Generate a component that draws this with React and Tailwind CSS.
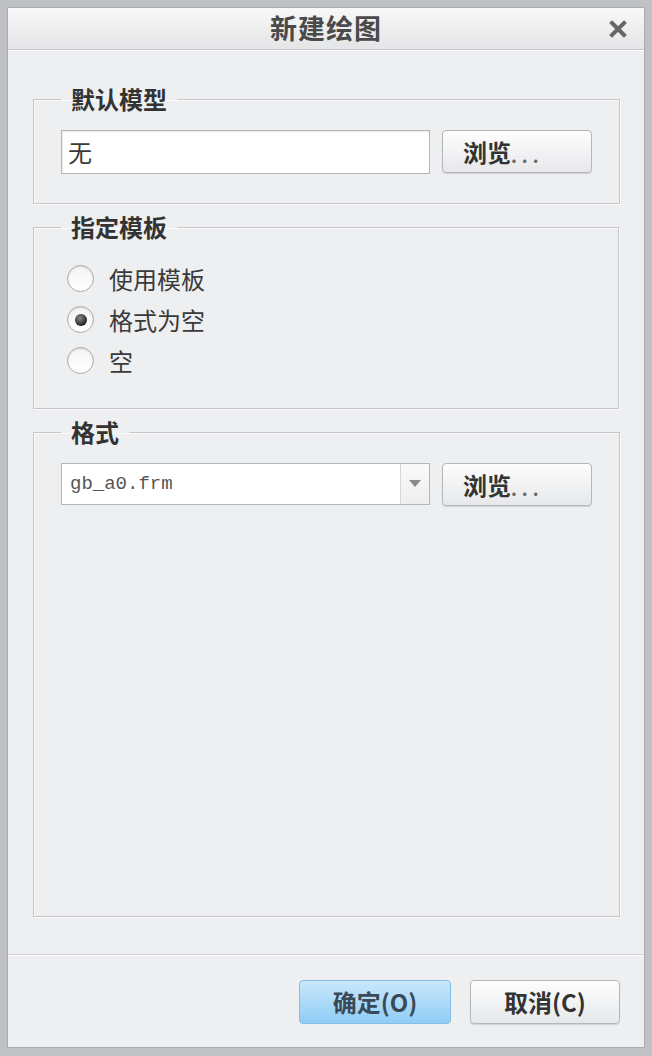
const cjk = { fontFamily: '"Noto Sans CJK SC", "Noto Sans", sans-serif' };

function Browse() {
    return (
        <button
            className="w-[150px] h-[43px] rounded-[4px] border border-[#b4b6b9] bg-gradient-to-b from-[#fdfdfd] to-[#e7e8ea] shadow-[0_1px_1px_rgba(0,0,0,0.12)] flex items-center pl-[20px] text-[#333]"
            style={cjk}
        >
            <span className="text-[24px] font-bold leading-none">浏览</span>
            <span className="text-[18px] font-bold leading-none tracking-[5px] text-[#666] mt-[6px]">...</span>
        </button>
    );
}

function Radio({ label, checked }) {
    return (
        <label className="h-[41px] flex items-center gap-[15px] pl-[6px]">
            <span className="w-[27px] h-[27px] rounded-full border border-[#a9abae] bg-gradient-to-b from-[#f4f4f4] to-[#ffffff] shadow-[inset_0_1px_2px_rgba(0,0,0,0.12)] flex items-center justify-center">
                {checked && <span className="w-[12px] h-[12px] rounded-full bg-[radial-gradient(circle_at_40%_35%,#888,#222_70%)]"></span>}
            </span>
            <span className="text-[24px] leading-none text-[#3a3a3a]" style={cjk}>{label}</span>
        </label>
    );
}

function Group({ title, className, children }) {
    return (
        <fieldset className={`mx-[25px] border border-[#c5c7ca] shadow-[inset_1px_1px_0_#fafafa,1px_1px_0_#fafafa] px-[27px] ${className}`}>
            <legend className="px-[10px] text-[24px] leading-[26px] font-bold text-[#333]" style={cjk}>
                {title}
            </legend>
            {children}
        </fieldset>
    );
}

export default function App() {
    return (
        <div className="w-[652px] h-[1056px] bg-[#bfc1c4] px-[7px] pt-[7px] pb-[8px] flex flex-col">
            <div className="flex-1 flex flex-col bg-[#eeeff1] border border-[#a9abae]">
                {/* title bar */}
                <div className="h-[42px] shrink-0 bg-gradient-to-b from-[#f8f8f8] to-[#e4e5e7] border-b border-[#c4c6c9] flex items-center justify-center relative">
                    <span className="text-[27px] font-bold text-[#4a4a4a] tracking-[1px]" style={cjk}>新建绘图</span>
                    <svg className="absolute right-[17px] top-[12px]" width="18" height="18" viewBox="0 0 18 18">
                        <path d="M3 3 L15 15 M15 3 L3 15" stroke="#666" strokeWidth="4" strokeLinecap="square" />
                    </svg>
                </div>
                <div className="h-px bg-white shrink-0"></div>

                <div className="pt-[35px] flex flex-col gap-[10px]">
                    <Group title="默认模型" className="pb-[29px]">
                        <div className="mt-[18px] flex gap-[12px]">
                            <div className="w-[369px] h-[44px] bg-white border border-[#b3b5b8] shadow-[inset_1px_1px_1px_rgba(0,0,0,0.08)] flex items-center pl-[6px] text-[24px] text-[#3a3a3a]" style={cjk}>
                                无
                            </div>
                            <Browse />
                        </div>
                    </Group>

                    <Group title="指定模板" className="pb-[27px]">
                        <div className="mt-[18px] flex flex-col">
                            <Radio label="使用模板" />
                            <Radio label="格式为空" checked />
                            <Radio label="空" />
                        </div>
                    </Group>

                    <Group title="格式" className="h-[498px]">
                        <div className="mt-[18px] flex gap-[12px]">
                            <div className="w-[369px] h-[42px] bg-white border border-[#b3b5b8] flex">
                                <div className="flex-1 flex items-center pl-[8px] text-[19px] text-[#555]" style={{ fontFamily: '"Liberation Mono", monospace' }}>
                                    gb_a0.frm
                                </div>
                                <div className="w-[29px] border-l border-[#d6d7d9] bg-gradient-to-b from-[#fafafa] to-[#eeeeee] flex items-center justify-center">
                                    <svg width="12" height="8" viewBox="0 0 12 8">
                                        <path d="M0 0 H12 L6 7 Z" fill="#8a8a8a" />
                                    </svg>
                                </div>
                            </div>
                            <Browse />
                        </div>
                    </Group>
                </div>

                {/* footer */}
                <div className="mt-auto border-t border-[#cfd1d4] shadow-[inset_0_1px_0_#ffffff] h-[93px] flex justify-end items-start gap-[19px] pt-[25px] pr-[24px]">
                    <button
                        className="w-[152px] h-[44px] rounded-[4px] border border-[#86bde4] bg-gradient-to-b from-[#c9e7fb] to-[#8fcdf5] flex items-center justify-center text-[24px] font-bold text-[#3b4a58]"
                        style={cjk}
                    >
                        确定(O)
                    </button>
                    <button
                        className="w-[150px] h-[44px] rounded-[4px] border border-[#b4b6b9] bg-gradient-to-b from-[#fdfdfd] to-[#e7e8ea] shadow-[0_1px_1px_rgba(0,0,0,0.12)] flex items-center justify-center text-[24px] font-bold text-[#333]"
                        style={cjk}
                    >
                        取消(C)
                    </button>
                </div>
            </div>
        </div>
    );
}
